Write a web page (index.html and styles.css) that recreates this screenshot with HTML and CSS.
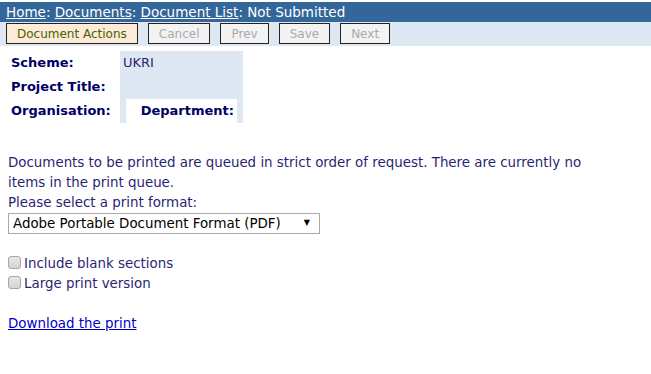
FILE: index.html
```html
<!DOCTYPE html>
<html>
<head>
    <title>Not Submitted</title>
    <link rel="stylesheet" href="styles.css">
</head>
<body>
    <div class="crumbs">
        <a href="#">Home</a>: <a href="#">Documents</a>: <a href="#">Document List</a>: Not Submitted
    </div>
    <div class="toolbar">
        <button class="btn btn-main">Document Actions</button>
        <button class="btn" disabled>Cancel</button>
        <button class="btn" disabled>Prev</button>
        <button class="btn" disabled>Save</button>
        <button class="btn" disabled>Next</button>
    </div>

    <div class="info">
        <div class="info-labels">
            <div class="lbl">Scheme:</div>
            <div class="lbl">Project Title:</div>
            <div class="lbl">Organisation:</div>
        </div>
        <div class="info-values">
            <div class="val">UKRI</div>
            <div class="val"></div>
            <div class="val dept">Department:</div>
        </div>
    </div>

    <div class="content">
        <p class="note">Documents to be printed are queued in strict order of request. There are currently no items in the print queue.</p>
        <label class="fmt-label" for="fmt">Please select a print format:</label>
        <span class="fmt-wrap">
            <select id="fmt" class="fmt">
                <option>Adobe Portable Document Format (PDF)</option>
            </select>
        </span>

        <div class="opts">
            <label class="opt"><input type="checkbox">Include blank sections</label>
            <label class="opt"><input type="checkbox">Large print version</label>
        </div>

        <a class="download" href="#">Download the print</a>
    </div>
</body>
</html>
```

FILE: styles.css
```css
body {
    font-family: "DejaVu Sans", Verdana, sans-serif;
    font-size: 13.4px;
    color: #2a1f73;
    margin: 0;
    padding-top: 2px;
}

.crumbs {
    background-color: #336699;
    color: white;
    font-size: 13.5px;
    height: 20px;
    line-height: 20px;
    padding-left: 6px;
}

.crumbs a {
    color: white;
}

.toolbar {
    background-color: #dde8f3;
    height: 24px;
    padding: 1px 0 0 6px;
    box-sizing: border-box;
    display: flex;
    gap: 10px;
    align-items: flex-start;
}

.btn {
    font-family: "DejaVu Sans", Verdana, sans-serif;
    font-size: 12px;
    height: 21px;
    padding: 0 10px;
    border: 1px solid #222;
    background-color: #f3f3f3;
    color: #aaaaaa;
}

.btn-main {
    background-color: #fdead8;
    color: #476300;
    padding: 0 10px;
}

.info {
    display: flex;
    margin: 5px 0 0 11px;
    font-size: 13px;
}

.info-labels .lbl {
    font-weight: bold;
    color: #000066;
    height: 24px;
    line-height: 24px;
    width: 109px;
}

.info-values {
    background-color: #dde8f3;
    width: 123px;
}

.val {
    height: 24px;
    line-height: 24px;
    padding-left: 3px;
}

.val.dept {
    background-color: white;
    margin: 0 6px;
    text-align: right;
    font-weight: bold;
    color: #000066;
    padding: 0 3px 0 0;
}

.content {
    padding: 30px 8px 0 8px;
}

.note {
    margin: 0;
    line-height: 20px;
    width: 585px;
}

.fmt-label {
    display: block;
    line-height: 20px;
}

.fmt-wrap {
    position: relative;
    display: inline-block;
}

.fmt-wrap::after {
    content: "\25BC";
    position: absolute;
    right: 10px;
    top: 5px;
    font-size: 8px;
    color: #000;
    pointer-events: none;
}

.fmt {
    appearance: none;
    -webkit-appearance: none;
    font-family: "DejaVu Sans", Verdana, sans-serif;
    font-size: 13.4px;
    width: 312px;
    height: 21px;
    margin: 0;
    padding: 0 0 0 4px;
    border: 1px solid #a9a9a9;
    border-radius: 0;
    background-color: white;
    color: #000;
}

.opts {
    margin-top: 20px;
}

.opt {
    display: block;
    line-height: 20px;
}

.opt input {
    appearance: none;
    -webkit-appearance: none;
    margin: 0 3px 0 0;
    width: 13px;
    height: 13px;
    border: 1px solid #a6a6a6;
    border-radius: 3px;
    background: linear-gradient(#e8e8e8, #d4d4d4);
    vertical-align: -1px;
}

.download {
    display: inline-block;
    margin-top: 22px;
    color: #0000cc;
}
```
